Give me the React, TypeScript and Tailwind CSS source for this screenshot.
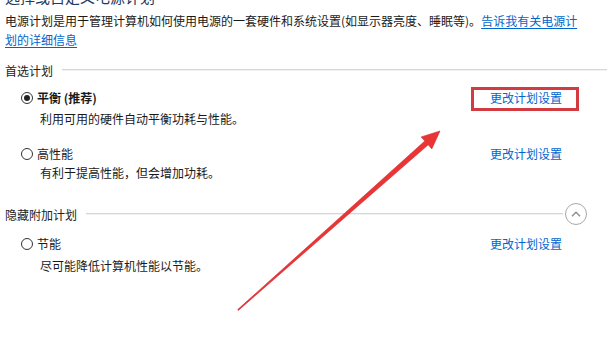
import React from "react";

type Plan = {
  name: React.ReactNode;
  desc: string;
  checked?: boolean;
  boxed?: boolean;
  gap: string;
};

function Radio({ checked }: { checked?: boolean }) {
  return (
    <span className="w-[12px] h-[12px] rounded-full border border-[#333] bg-white flex items-center justify-center shrink-0">
      {checked && <span className="w-[6px] h-[6px] rounded-full bg-[#222]" />}
    </span>
  );
}

function PlanRow({ plan, className }: { plan: Plan; className?: string }) {
  return (
    <div className={className}>
      <div className="flex items-center pr-[45px]">
        <div className="flex items-center gap-[4px] ml-[16px]">
          <Radio checked={plan.checked} />
          <span className="leading-[19px] text-[#1a1a1a]">{plan.name}</span>
        </div>
        <a className="relative ml-auto leading-[19px] text-[#0066cc] cursor-pointer">
          更改计划设置
          {plan.boxed && (
            <span className="absolute -left-[19px] -right-[17px] -top-[1px] -bottom-[4px] border-[3px] border-[#d23b40]" />
          )}
        </a>
      </div>
      <div className={`pl-[35px] leading-[19px] text-[#1a1a1a] ${plan.gap}`}>{plan.desc}</div>
    </div>
  );
}

function SectionHeader({ title, collapse, className }: { title: string; collapse?: boolean; className?: string }) {
  return (
    <div className={`flex items-center h-[22px] ${collapse ? "pr-[20px]" : ""} ${className ?? ""}`}>
      <span className="leading-[19px] text-[#222]">{title}</span>
      <span className="flex-1 h-[2px] border-t border-[#d6d6d6] border-b border-b-[#f2f2f2] ml-[9px]" />
      {collapse && (
        <span className="w-[22px] h-[22px] rounded-full border border-[#a8a8a8] flex items-center justify-center ml-[2px]">
          <svg width="10" height="6" viewBox="0 0 10 6" fill="none" stroke="#8a8a8a" strokeWidth="1.3">
            <path d="M1 5.2 L5 1.2 L9 5.2" />
          </svg>
        </span>
      )}
    </div>
  );
}

export default function App() {
  return (
    <div className="w-[607px] h-[357px] overflow-hidden bg-white relative font-['Noto_Sans_CJK_SC',sans-serif] text-[12px]">
      <div className="pl-[5px]">
        <div className="text-[15px] leading-[20px] text-[#1e3a5f] -mt-[13px]">选择或自定义电源计划</div>

        <p className="w-[578px] leading-[19px] mt-[4px] text-[#1a1a1a]">
          电源计划是用于管理计算机如何使用电源的一套硬件和系统设置(如显示器亮度、睡眠等)。
          <a className="text-[#0066cc] underline underline-offset-2 cursor-pointer">告诉我有关电源计划的详细信息</a>
        </p>

        <SectionHeader title="首选计划" className="mt-[10px]" />

        <PlanRow
          className="mt-[7px]"
          plan={{
            name: <span className="font-bold">平衡 (推荐)</span>,
            desc: "利用可用的硬件自动平衡功耗与性能。",
            checked: true,
            boxed: true,
            gap: "mt-[2px]",
          }}
        />
        <PlanRow
          className="mt-[16px]"
          plan={{ name: "高性能", desc: "有利于提高性能，但会增加功耗。", gap: "mt-0" }}
        />

        <SectionHeader title="隐藏附加计划" collapse className="mt-[21px]" />

        <PlanRow
          className="mt-[9px]"
          plan={{ name: "节能", desc: "尽可能降低计算机性能以节能。", gap: "mt-[3px]" }}
        />
      </div>

      {/* annotation arrow */}
      <svg className="absolute inset-0 pointer-events-none" width="607" height="357" viewBox="0 0 607 357">
        <polygon
          points="238.3,310.4 428.2,144.8 431.8,148.9 440,131 421.2,136.9 424.8,141 237.7,309.6"
          fill="#ea3535"
          stroke="#d02a30"
          strokeWidth="0.6"
          strokeLinejoin="round"
        />
      </svg>
    </div>
  );
}
